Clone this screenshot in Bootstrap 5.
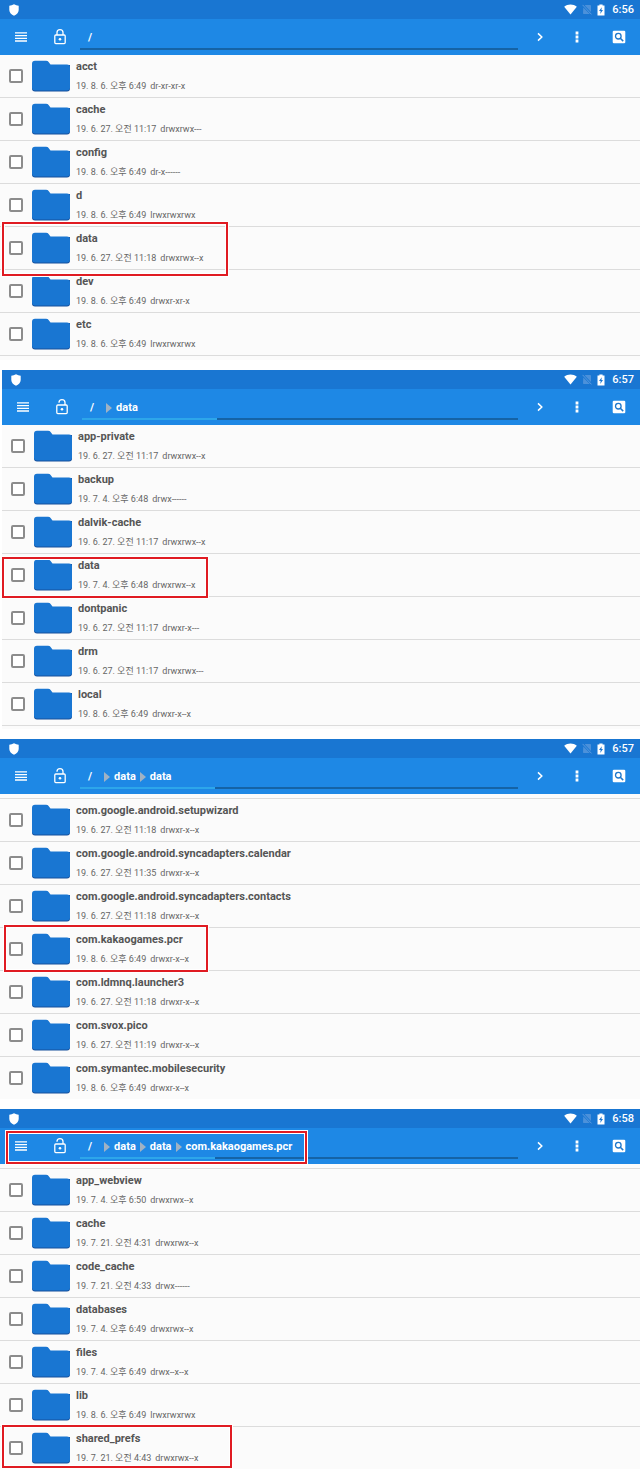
<!DOCTYPE html>
<html lang="ko">
<head>
<meta charset="utf-8">
<meta name="viewport" content="width=device-width, initial-scale=1">
<title>File explorer</title>
<link href="https://cdn.jsdelivr.net/npm/bootstrap@5.3.0/dist/css/bootstrap.min.css" rel="stylesheet">
<style>
  body { font-family: Roboto, "Noto Sans CJK KR", sans-serif; background: #fff; color: #555; }
  .screens { gap: 10px; }
  .screen-inset { margin-left: 2px; }
  .status-bar { height: 19px; background: #1976d2; padding: 0 6px 0 8px; font-size: 11px; line-height: 19px; font-weight: 500; }
  .status-icons { gap: 5px; }
  .status-time { margin-left: 2px; }
  .tool-bar { height: 36px; background: #1e88e5; padding: 0 8px; }
  .tool-btn { width: 26px; height: 36px; }
  .lock-btn { margin: 0 7px 0 13px; }
  .search-btn { margin-left: 5px; }
  .right-btns { gap: 11px; padding-left: 9px; }
  .path-box { height: 31px; align-self: flex-start; border-bottom: 2px solid #1563a6; font-size: 11px; line-height: 16px; font-weight: 700; padding: 8px 0 0 8px; }
  .path-box.loading { border-image: linear-gradient(90deg, #2da6ea 31%, #1563a6 31%) 1; }
  .crumb + .crumb::before { content: ""; border: 5px solid transparent; border-left: 6px solid #9fb2c4; border-right: 0; margin-right: 4px; }
  .crumb + .crumb { margin-left: 4px; }
  .crumb:nth-child(2) { margin-left: 12px; }
  .file-list { background: #fbfbfb; }
  .file-list.padded { padding-bottom: 4px; }
  .screen-inset .file-list.padded { padding-bottom: 3px; }
  .file-list.scrolled { padding-top: 4px; }
  .file-list.scrolled .file-rows { border-top: 1px solid #dcdcdc; }
  .file-row { padding: 4px 9px; border-bottom: 1px solid #dcdcdc; }
  .scrolled .file-row:last-child { border-bottom: 0; }
  .file-check { appearance: none; width: 14px; height: 14px; margin: 0 9px 0 0; border: 2px solid #8c8c8c; border-radius: 2px; background: #fff; flex: none; }
  .file-check:checked { background: #1976d2; border-color: #1976d2; }
  .folder-icon { width: 38px; height: 32px; margin-right: 6px; flex: none; }
  .file-name { font-size: 11px; line-height: 16px; font-weight: 700; }
  .file-meta { font-size: 9px; line-height: 14px; margin-top: 4px; gap: 4px; color: #666; }
  .marker { border: 2px solid #e01b22; box-shadow: 0 0 0 1px #fff, inset 0 0 0 1px #fff; pointer-events: none; z-index: 2; }
  .mark-1 { left: 2px; width: 226px; top: -5px; bottom: -7px; }
  .mark-2 { left: 0; width: 206px; top: 3px; bottom: -2px; }
  .mark-3 { left: 4px; width: 204px; top: -3px; bottom: -2px; }
  .mark-4 { left: 2px; width: 230px; top: -2px; bottom: 1px; }
  .mark-path { left: 6px; width: 301px; top: 3px; bottom: 0; }
</style>
</head>
<body>
<svg class="d-none" aria-hidden="true">
  <symbol id="i-shield" viewBox="0 0 12 12"><path fill="#fff" d="M6 0.3 C7.6 1.2 9 1.6 10.7 1.8 V6 C10.7 8.6 8.6 10.6 6 11.8 C3.4 10.6 1.3 8.6 1.3 6 V1.8 C3 1.6 4.4 1.2 6 0.3z"/></symbol>
  <symbol id="i-wifi" viewBox="0 0 13 11"><path fill="#fff" d="M6.5 10.6 L0.2 2.8 C3.6 -0.4 9.4 -0.4 12.8 2.8z"/></symbol>
  <symbol id="i-sim" viewBox="0 0 10 11"><path fill="#4c91da" d="M3.4 1 H8.2 Q9 1 9 1.8 V8 L2.8 1.6z M1.3 3.4 L7.8 10 H1.8 Q1 10 1 9.2z"/><path stroke="#5b9bdf" d="M0.6 0.9 L9.5 10.4"/></symbol>
  <symbol id="i-battery" viewBox="0 0 8 12"><path fill="#fff" d="M2.4 .5 H5.6 V1.6 H7.5 V11.5 H.5 V1.6 H2.4z"/><path fill="#1976d2" d="M4.8 3.2 L2 7 H3.7 L3.2 9.9 L6 6 H4.4z"/></symbol>
  <symbol id="i-menu" viewBox="0 0 14 12"><path stroke="#fff" stroke-width="1.3" d="M1 1.9h12M1 4.6h12M1 7.3h12M1 10h12"/></symbol>
  <symbol id="i-locked" viewBox="0 0 14 18"><rect x="1.8" y="7" width="10.4" height="8.6" rx="1" fill="none" stroke="#fff" stroke-width="1.3"/><path fill="none" stroke="#fff" stroke-width="1.3" d="M4 7V4.6a3 3 0 0 1 6 0V7"/><circle cx="7" cy="11.3" r="1.3" fill="#fff"/></symbol>
  <symbol id="i-unlocked" viewBox="0 0 14 18"><rect x="1.8" y="7" width="10.4" height="8.6" rx="1" fill="none" stroke="#fff" stroke-width="1.3"/><path fill="none" stroke="#fff" stroke-width="1.3" d="M4 4.8V4.6a3 3 0 0 1 6 0V7"/><circle cx="7" cy="11.3" r="1.3" fill="#fff"/></symbol>
  <symbol id="i-next" viewBox="0 0 8 10"><path fill="none" stroke="#fff" stroke-width="1.5" d="M2 1.4 L5.8 5 L2 8.6"/></symbol>
  <symbol id="i-more" viewBox="0 0 4 12"><path fill="#fff" d="M.6 .6h2.8v2.8H.6zM.6 4.6h2.8v2.8H.6zM.6 8.6h2.8v2.8H.6z"/></symbol>
  <symbol id="i-search" viewBox="0 0 14 14"><rect x=".7" y=".7" width="12.6" height="12.6" rx="1.2" fill="#fff"/><circle cx="6.3" cy="6.2" r="2.8" fill="none" stroke="#1e78cc" stroke-width="1.3"/><path stroke="#1e78cc" stroke-width="1.5" d="M8.3 8.2 L11.2 11.1"/></symbol>
  <symbol id="i-folder" viewBox="0 0 38 32"><path fill="#17509c" d="M0 5 H38 V28.5 Q38 31.5 35 31.5 H3 Q0 31.5 0 28.5z"/><path fill="#1976d2" d="M3 .8 H14 Q15.8 .8 16.6 2 L18.5 4.4 H35 Q38 4.4 38 7.4 V27.6 Q38 30.4 35 30.4 H3 Q0 30.4 0 27.6 V3.8 Q0 .8 3 .8z"/></symbol>
</svg>

<main class="screens d-flex flex-column" id="screens"></main>

<script src="https://cdn.jsdelivr.net/npm/bootstrap@5.3.0/dist/js/bootstrap.bundle.min.js"></script>
<script>
  const screens = [
    { time: "6:56", path: [], list: "padded", files: [
      ["acct", "19. 8. 6. 오후 6:49", "dr-xr-xr-x"],
      ["cache", "19. 6. 27. 오전 11:17", "drwxrwx---"],
      ["config", "19. 8. 6. 오후 6:49", "dr-x------"],
      ["d", "19. 8. 6. 오후 6:49", "lrwxrwxrwx"],
      ["data", "19. 6. 27. 오전 11:18", "drwxrwx--x", "mark-1"],
      ["dev", "19. 8. 6. 오후 6:49", "drwxr-xr-x"],
      ["etc", "19. 8. 6. 오후 6:49", "lrwxrwxrwx"]] },
    { time: "6:57", path: ["data"], list: "padded", inset: true, files: [
      ["app-private", "19. 6. 27. 오전 11:17", "drwxrwx--x"],
      ["backup", "19. 7. 4. 오후 6:48", "drwx------"],
      ["dalvik-cache", "19. 6. 27. 오전 11:17", "drwxrwx--x"],
      ["data", "19. 7. 4. 오후 6:48", "drwxrwx--x", "mark-2"],
      ["dontpanic", "19. 6. 27. 오전 11:17", "drwxr-x---"],
      ["drm", "19. 6. 27. 오전 11:17", "drwxrwx---"],
      ["local", "19. 8. 6. 오후 6:49", "drwxr-x--x"]] },
    { time: "6:57", path: ["data", "data"], list: "scrolled", files: [
      ["com.google.android.setupwizard", "19. 6. 27. 오전 11:18", "drwxr-x--x"],
      ["com.google.android.syncadapters.calendar", "19. 6. 27. 오전 11:35", "drwxr-x--x"],
      ["com.google.android.syncadapters.contacts", "19. 6. 27. 오전 11:18", "drwxr-x--x"],
      ["com.kakaogames.pcr", "19. 8. 6. 오후 6:49", "drwxr-x--x", "mark-3"],
      ["com.ldmnq.launcher3", "19. 6. 27. 오전 11:18", "drwxr-x--x"],
      ["com.svox.pico", "19. 6. 27. 오전 11:19", "drwxr-x--x"],
      ["com.symantec.mobilesecurity", "19. 8. 6. 오후 6:49", "drwxr-x--x"]] },
    { time: "6:58", path: ["data", "data", "com.kakaogames.pcr"], list: "scrolled", markPath: true, files: [
      ["app_webview", "19. 7. 4. 오후 6:50", "drwxrwx--x"],
      ["cache", "19. 7. 21. 오전 4:31", "drwxrwx--x"],
      ["code_cache", "19. 7. 21. 오전 4:33", "drwx------"],
      ["databases", "19. 7. 4. 오후 6:49", "drwxrwx--x"],
      ["files", "19. 7. 4. 오후 6:49", "drwx--x--x"],
      ["lib", "19. 8. 6. 오후 6:49", "lrwxrwxrwx"],
      ["shared_prefs", "19. 7. 21. 오전 4:43", "drwxrwx--x", "mark-4"]] }
  ];

  const icon = (name, w, h) => `<svg width="${w}" height="${h}" aria-hidden="true"><use href="#i-${name}"/></svg>`;
  const button = (label, svg, extra = "") =>
    `<button type="button" aria-label="${label}" class="tool-btn ${extra} btn border-0 rounded-0 p-0 d-flex align-items-center justify-content-center flex-shrink-0">${svg}</button>`;
  const crumb = text => `<a href="#" class="crumb d-flex align-items-center text-white text-decoration-none">${text}</a>`;

  const row = ([name, date, mode, mark], id) => `
    <li class="file-row position-relative">
      <label class="d-flex align-items-center" for="${id}">
        <input type="checkbox" class="file-check" id="${id}">
        <svg class="folder-icon" aria-hidden="true"><use href="#i-folder"/></svg>
        <span class="d-block">
          <span class="file-name d-block">${name}</span>
          <span class="file-meta d-flex"><span>${date}</span><span>${mode}</span></span>
        </span>
      </label>
      ${mark ? `<span class="marker ${mark} position-absolute"></span>` : ""}
    </li>`;

  document.getElementById("screens").innerHTML = screens.map((s, i) => `
    <section class="${s.inset ? "screen-inset" : ""}">
      <div class="status-bar d-flex align-items-center justify-content-between text-white">
        ${icon("shield", 12, 12)}
        <div class="status-icons d-flex align-items-center">
          ${icon("wifi", 13, 11)}${icon("sim", 10, 11)}${icon("battery", 8, 12)}
          <span class="status-time">${s.time}</span>
        </div>
      </div>
      <header class="tool-bar position-relative d-flex align-items-center">
        ${button("Menu", icon("menu", 14, 12))}
        ${button("Lock", icon(s.path.length ? "unlocked" : "locked", 14, 18), "lock-btn")}
        <nav aria-label="Path" class="path-box ${s.path.length ? "loading" : ""} d-flex align-items-center flex-grow-1">
          ${["/", ...s.path].map(crumb).join("")}
        </nav>
        <div class="right-btns d-flex">
          ${button("Next", icon("next", 8, 10))}${button("More", icon("more", 4, 12))}
          ${button("Search", icon("search", 14, 14), "search-btn")}
        </div>
        ${s.markPath ? '<span class="marker mark-path position-absolute"></span>' : ""}
      </header>
      <div class="file-list ${s.list}">
        <ul class="file-rows list-unstyled mb-0">${s.files.map((f, n) => row(f, `file-${i}-${n}`)).join("")}</ul>
      </div>
    </section>`).join("");
</script>
</body>
</html>
